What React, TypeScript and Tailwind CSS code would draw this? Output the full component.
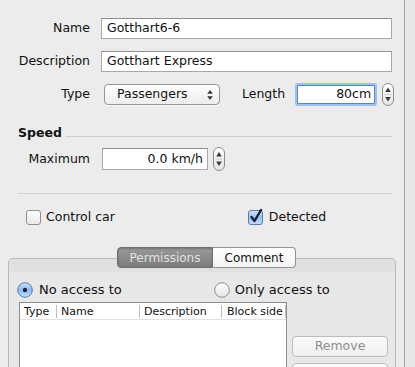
import React from "react";

function Stepper({ h = 22 }: { h?: number }) {
  return (
    <svg width="12" height={h} viewBox={`0 0 12 ${h}`} className="block">
      <defs>
        <linearGradient id="stg" x1="0" y1="0" x2="0" y2="1">
          <stop offset="0" stopColor="#ffffff" />
          <stop offset="1" stopColor="#e4e4e4" />
        </linearGradient>
      </defs>
      <rect x="0.5" y="0.5" width="11" height={h - 1} rx="5.5" fill="url(#stg)" stroke="#8c8c8c" />
      <line x1="2" y1={h / 2} x2="10" y2={h / 2} stroke="#d0d0d0" />
      <path d={`M6 ${h / 2 - 7} L8.8 ${h / 2 - 2.5} L3.2 ${h / 2 - 2.5} Z`} fill="#3a3a3a" />
      <path d={`M6 ${h / 2 + 7} L8.8 ${h / 2 + 2.5} L3.2 ${h / 2 + 2.5} Z`} fill="#3a3a3a" />
    </svg>
  );
}

function PopupArrows() {
  return (
    <svg width="8" height="12" viewBox="0 0 8 12" className="block">
      <path d="M4 1 L6.8 4.8 L1.2 4.8 Z" fill="#3a3a3a" />
      <path d="M4 11 L6.8 7.2 L1.2 7.2 Z" fill="#3a3a3a" />
    </svg>
  );
}

function Radio({ on }: { on?: boolean }) {
  return (
    <svg width="16" height="16" viewBox="0 0 16 16" className="block">
      <defs>
        <linearGradient id="rbOn" x1="0" y1="0" x2="0" y2="1">
          <stop offset="0" stopColor="#cfe3fa" />
          <stop offset="0.5" stopColor="#8cbcf0" />
          <stop offset="1" stopColor="#bfe0ff" />
        </linearGradient>
        <linearGradient id="rbOff" x1="0" y1="0" x2="0" y2="1">
          <stop offset="0" stopColor="#ffffff" />
          <stop offset="1" stopColor="#e6e6e6" />
        </linearGradient>
      </defs>
      <circle cx="8" cy="8" r="7.3" fill={on ? "url(#rbOn)" : "url(#rbOff)"} stroke={on ? "#5a7bab" : "#8e8e8e"} strokeWidth="1" />
      {on && <circle cx="8" cy="8" r="2.2" fill="#1b2438" />}
    </svg>
  );
}

function CheckBox({ on }: { on?: boolean }) {
  return (
    <svg width="16" height="17" viewBox="0 0 16 17" className="block overflow-visible">
      <defs>
        <linearGradient id="cbOn" x1="0" y1="0" x2="0" y2="1">
          <stop offset="0" stopColor="#d3e6fb" />
          <stop offset="0.5" stopColor="#96c2f2" />
          <stop offset="1" stopColor="#c2e0ff" />
        </linearGradient>
        <linearGradient id="cbOff" x1="0" y1="0" x2="0" y2="1">
          <stop offset="0" stopColor="#ffffff" />
          <stop offset="1" stopColor="#e8e8e8" />
        </linearGradient>
      </defs>
      <rect x="0.5" y="2.5" width="14" height="14" rx="2.5" fill={on ? "url(#cbOn)" : "url(#cbOff)"} stroke={on ? "#5a7bab" : "#8e8e8e"} />
      {on && <path d="M3.5 9 L6.5 13 L13 2" fill="none" stroke="#15203c" strokeWidth="2.4" strokeLinecap="round" strokeLinejoin="round" />}
    </svg>
  );
}

export default function App() {
  return (
    <div className="w-[415px] h-[367px] overflow-hidden bg-[#ececec] flex font-['DejaVu_Sans',sans-serif] text-[12.5px] text-[#111]">
      <div className="w-[404px] shrink-0 flex flex-col pt-[18px]">
        {/* Name */}
        <div className="flex items-center h-[21px] pl-[18px]">
          <div className="w-[72px] text-right">Name</div>
          <div className="ml-[11px] w-[291px] h-[21px] bg-white border border-[#a8a8a8] border-t-[#8f8f8f] pl-[5px] flex items-center">
            Gotthart6-6
          </div>
        </div>
        {/* Description */}
        <div className="flex items-center h-[21px] pl-[18px] mt-[12px]">
          <div className="w-[72px] text-right">Description</div>
          <div className="ml-[11px] w-[291px] h-[21px] bg-white border border-[#a8a8a8] border-t-[#8f8f8f] pl-[5px] flex items-center">
            Gotthart Express
          </div>
        </div>
        {/* Type / Length */}
        <div className="flex items-center h-[23px] pl-[18px] mt-[11px]">
          <div className="w-[72px] text-right">Type</div>
          <div className="ml-[14px] w-[116px] h-[21px] rounded-[4px] border border-[#959595] bg-gradient-to-b from-white to-[#ededed] flex items-center pl-[12px] pr-[5px] shadow-[0_1px_0_#f8f8f8]">
            <span className="flex-1">Passengers</span>
            <PopupArrows />
          </div>
          <div className="ml-[22px]">Length</div>
          <div className="ml-[12px] w-[78px] h-[19px] bg-white border border-[#4f86cf] shadow-[0_0_0_2px_#9ec2ee] rounded-[1px] flex items-center justify-end pr-[3px]">
            80cm
          </div>
          <div className="ml-[7px]">
            <Stepper h={23} />
          </div>
        </div>
        {/* Speed heading */}
        <div className="flex items-start pl-[18px] pr-[12px] mt-[19px] h-[15px]">
          <div className="font-bold leading-[15px]">Speed</div>
          <div className="flex-1 ml-[4px] mt-[11px] border-t border-[#cfcfcf]" />
        </div>
        {/* Maximum */}
        <div className="flex items-center h-[24px] pl-[18px] mt-[7px]">
          <div className="w-[72px] text-right">Maximum</div>
          <div className="ml-[12px] w-[106px] h-[22px] bg-white border border-[#a8a8a8] border-t-[#8f8f8f] flex items-center justify-end pr-[4px]">
            0.0 km/h
          </div>
          <div className="ml-[5px]">
            <Stepper h={24} />
          </div>
        </div>
        {/* separator */}
        <div className="ml-[18px] mr-[12px] mt-[22px] border-t border-[#d2d2d2]" />
        {/* checkboxes */}
        <div className="flex items-center h-[17px] mt-[15px]">
          <div className="ml-[26px] -mt-[2px]">
            <CheckBox />
          </div>
          <div className="ml-[4px]">Control car</div>
          <div className="ml-[133px] -mt-[2px]">
            <CheckBox on />
          </div>
          <div className="ml-[5px]">Detected</div>
        </div>
        {/* tabbed pane */}
        <div className="relative mt-[21px] ml-[8px] w-[388px] flex-1">
          <div className="absolute left-[109px] top-0 z-10 flex h-[21px] text-[12px]">
            <div className="w-[96px] h-[21px] rounded-l-[4px] border border-[#6e6e6e] bg-gradient-to-b from-[#9a9a9a] to-[#7c7c7c] text-[#e2e2e2] flex items-center justify-center shadow-[inset_0_1px_2px_rgba(0,0,0,0.25)]">
              Permissions
            </div>
            <div className="w-[83px] h-[21px] rounded-r-[4px] border border-l-0 border-[#939393] bg-gradient-to-b from-white to-[#f3f3f3] text-[#111] flex items-center justify-center">
              Comment
            </div>
          </div>
          <div className="mt-[11px] h-[200px] rounded-t-[5px] border border-[#b9b9b9] bg-[#e8e8e8] flex flex-col">
            <div className="h-[13px] bg-[#e0e0e0] rounded-t-[5px]" />
            {/* radios */}
            <div className="flex items-center h-[16px] mt-[10px]">
              <div className="ml-[8px]">
                <Radio on />
              </div>
              <div className="ml-[6px] text-[13px]">No access to</div>
              <div className="ml-[92px]">
                <Radio />
              </div>
              <div className="ml-[5px] text-[13px]">Only access to</div>
            </div>
            <div className="flex mt-[4px]">
              <div className="ml-[10px] w-[268px] h-[80px] bg-white border border-[#8c8c8c] border-b-0">
                <div className="flex h-[17px] text-[11px] text-[#111] border-b border-[#e2e2e2] items-center">
                  <div className="w-[37px] pl-[4px] border-r border-[#bdbdbd] leading-[13px]">Type</div>
                  <div className="w-[83px] pl-[4px] border-r border-[#bdbdbd] leading-[13px]">Name</div>
                  <div className="w-[82px] pl-[4px] border-r border-[#bdbdbd] leading-[13px]">Description</div>
                  <div className="w-[64px] pl-[5px] border-r border-[#bdbdbd] leading-[13px]">Block side</div>
                </div>
              </div>
              <div className="ml-[5px] flex flex-col">
                <div className="mt-[34px] w-[96px] h-[21px] rounded-[4px] border border-[#bcbcbc] bg-gradient-to-b from-[#fbfbfb] to-[#efefef] text-[#8d8d8d] flex items-center justify-center">
                  Remove
                </div>
                <div className="mt-[6px] w-[96px] h-[21px] rounded-[4px] border border-[#bcbcbc] bg-gradient-to-b from-[#fbfbfb] to-[#efefef]" />
              </div>
            </div>
          </div>
        </div>
      </div>
      <div className="w-px shrink-0 bg-[#a3a3a3]" />
      <div className="flex-1 bg-[#e8e8e8]" />
    </div>
  );
}
